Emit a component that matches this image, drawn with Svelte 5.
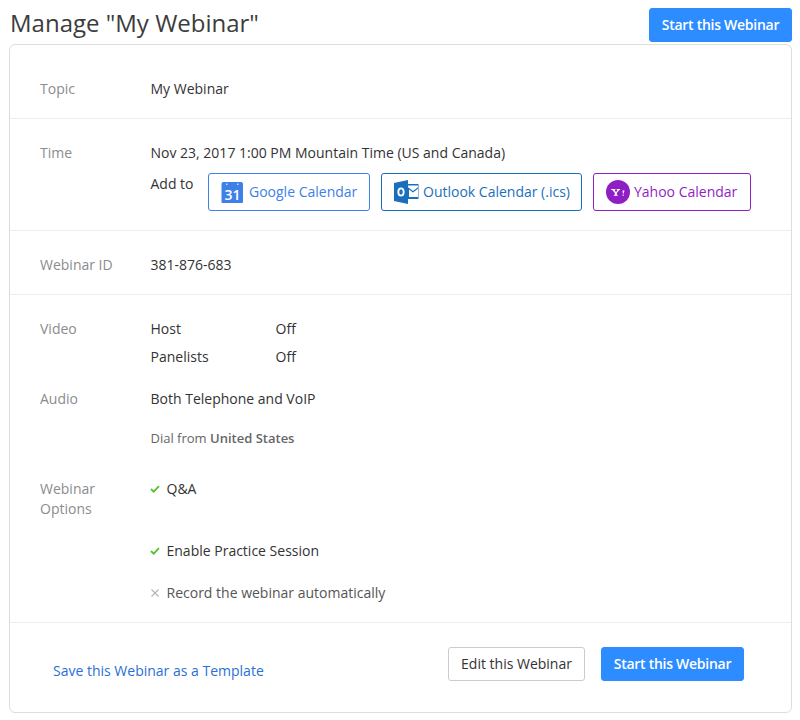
<script>
  const title = 'Manage "My Webinar"';
</script>

<div class="page">
  <header class="top">
    <h1>{title}</h1>
    <button class="btn primary small">Start this Webinar</button>
  </header>

  <section class="card">
    <div class="row topic">
      <div class="label">Topic</div>
      <div class="value">My Webinar</div>
    </div>

    <div class="row time">
      <div class="label">Time</div>
      <div class="value">
        <div>Nov 23, 2017 1:00 PM Mountain Time (US and Canada)</div>
        <div class="addto">
          <span class="addlabel">Add to</span>
          <a class="cal google" href="#g">
            <svg width="24" height="24" viewBox="0 0 24 24">
              <path d="M2 2h18a2 2 0 0 1 2 2v18a1 1 0 0 1-1 1H1.500a1 1 0 0 1-1-1V4a2 2 0 0 1 1.500-2z" fill="#3d80e8"/>
              <rect x="5" y="3.500" width="1.500" height="1.500" fill="#cfe0fa"/>
              <rect x="16" y="3.500" width="1.500" height="1.500" fill="#cfe0fa"/>
              <text x="11.500" y="20" text-anchor="middle" class="cal31">31</text>
            </svg>
            Google Calendar
          </a>
          <a class="cal outlook" href="#o">
            <svg width="25" height="24" viewBox="0 0 25 24">
              <path d="M14 4h10.500v15H14z" fill="#1a6fbd"/>
              <path d="M14 5.500h10v1.800L19 11l-5-3.700z" fill="#fff"/>
              <path d="M15 9.500l4 2.900 5-3.700V17H15z" fill="#fff"/>
              <path d="M0 3L14 0v24L0 21z" fill="#1a6fbd"/>
              <ellipse cx="7" cy="12" rx="2.700" ry="3.600" fill="none" stroke="#fff" stroke-width="1.800"/>
            </svg>
            Outlook Calendar (.ics)
          </a>
          <a class="cal yahoo" href="#y">
            <svg width="24" height="24" viewBox="0 0 24 24">
              <circle cx="12" cy="12" r="12" fill="#8f1fc4"/>
              <path d="M5 9h4.500v.8l-1 .2 1.500 2.200 1.600-2.200-1-.2V9h3.600v.8l-.9.2-2.500 3v1.800l1 .2v.8H7.800V15l1-.2V13L6.300 10l-1.300-.2z" fill="#fff"/>
              <path d="M16.500 10.500h2l-.8 3h-.8zM16.600 14.500h1.200v1.200h-1.200z" fill="#fff"/>
            </svg>
            Yahoo Calendar
          </a>
        </div>
      </div>
    </div>

    <div class="row idrow">
      <div class="label">Webinar ID</div>
      <div class="value">381-876-683</div>
    </div>

    <div class="row details">
      <div class="block video">
        <div class="label">Video</div>
        <div class="value">
          <div class="pair"><span class="who">Host</span><span>Off</span></div>
          <div class="pair second"><span class="who">Panelists</span><span>Off</span></div>
        </div>
      </div>

      <div class="block audio">
        <div class="label">Audio</div>
        <div class="value">
          <div>Both Telephone and VoIP</div>
          <div class="dial">Dial from <strong>United States</strong></div>
        </div>
      </div>

      <div class="block options">
        <div class="label">Webinar<br />Options</div>
        <div class="value">
          <div class="opt qa">
            <svg class="mark" width="10" height="8" viewBox="0 0 10 8"><path d="M1 4l2.700 2.700L9 1.200" fill="none" stroke="#55c22c" stroke-width="1.800"/></svg>
            Q&amp;A
          </div>
          <div class="opt practice">
            <svg class="mark" width="10" height="8" viewBox="0 0 10 8"><path d="M1 4l2.700 2.700L9 1.200" fill="none" stroke="#55c22c" stroke-width="1.800"/></svg>
            Enable Practice Session
          </div>
          <div class="opt record">
            <svg class="mark" width="10" height="10" viewBox="0 0 10 10"><path d="M1.500 1.500l7 7M8.500 1.500l-7 7" fill="none" stroke="#b5b5b5" stroke-width="1.200"/></svg>
            Record the webinar automatically
          </div>
        </div>
      </div>
    </div>

    <footer class="foot">
      <a class="template" href="#t">Save this Webinar as a Template</a>
      <div class="actions">
        <button class="btn ghost">Edit this Webinar</button>
        <button class="btn primary">Start this Webinar</button>
      </div>
    </footer>
  </section>
</div>

<style>
  :global(body) {
    margin: 0;
    background: #fff;
  }

  .page {
    width: 800px;
    height: 720px;
    box-sizing: border-box;
    padding: 8px 8px 0 9px;
    font-family: "Open Sans", "Liberation Sans", sans-serif;
    font-size: 14px;
    line-height: 20px;
    color: #333;
    overflow: hidden;
  }

  .top {
    display: flex;
    justify-content: space-between;
    align-items: flex-start;
    height: 36px;
  }

  h1 {
    margin: 0 0 0 1px;
    font-size: 24px;
    line-height: 30px;
    font-weight: 400;
    color: #3c3c3c;
  }

  .btn {
    box-sizing: border-box;
    height: 34px;
    border-radius: 3px;
    font-family: inherit;
    font-size: 14px;
    font-weight: 600;
    letter-spacing: -0.28px;
    line-height: 20px;
    padding: 0;
    cursor: pointer;
  }

  .primary {
    width: 143px;
    background: #2d8cff;
    color: #fff;
    border: 1px solid #2d8cff;
  }

  .ghost {
    width: 137px;
    background: #fff;
    color: #333;
    border: 1px solid #ccc;
    font-weight: 400;
    letter-spacing: 0;
  }

  .card {
    box-sizing: border-box;
    width: 783px;
    height: 669px;
    border: 1px solid #ddd;
    border-radius: 6px;
  }

  .row {
    display: flex;
    box-sizing: border-box;
    padding-left: 30px;
    border-bottom: 1px solid #eee;
  }

  .label {
    width: 110.500px;
    flex: none;
    color: #8c8c8c;
  }

  .topic {
    height: 74px;
    padding-top: 34px;
  }

  .time {
    height: 112px;
    padding-top: 24px;
  }

  .addto {
    display: flex;
    align-items: flex-start;
    margin-top: 11px;
  }

  .addlabel {
    width: 57.500px;
    flex: none;
  }

  .cal {
    box-sizing: border-box;
    height: 38px;
    display: flex;
    align-items: center;
    gap: 4px;
    border: 1px solid;
    border-radius: 3px;
    text-decoration: none;
    padding-left: 12px;
    margin-top: -1px;
    margin-right: 11px;
  }

  .google {
    width: 162px;
    color: #3d80e8;
    border-color: #3d80e8;
  }

  .outlook {
    width: 201px;
    color: #1a6fbd;
    border-color: #1a6fbd;
  }

  .yahoo {
    width: 158px;
    color: #8f1fc4;
    border-color: #8f1fc4;
  }

  .cal31 {
    font-size: 14px;
    font-weight: 600;
    fill: #fff;
  }

  .idrow {
    height: 64px;
    padding-top: 24px;
  }

  .details {
    height: 328px;
    padding-top: 24px;
    flex-direction: column;
  }

  .block {
    display: flex;
  }

  .pair {
    display: flex;
  }

  .pair.second {
    margin-top: 8px;
  }

  .who {
    width: 125px;
  }

  .audio {
    margin-top: 22px;
  }

  .dial {
    margin-top: 19px;
    margin-bottom: 1px;
    font-size: 13px;
    color: #666;
  }

  .dial strong {
    font-weight: 600;
  }

  .options {
    margin-top: 30px;
  }

  .opt {
    display: flex;
    align-items: center;
  }

  .mark {
    width: 10px;
    flex: none;
    margin-left: -1px;
    margin-right: 7px;
  }

  .practice {
    margin-top: 42px;
  }

  .record {
    margin-top: 22px;
    color: #555;
  }

  .foot {
    height: 89px;
    display: flex;
    box-sizing: border-box;
    justify-content: space-between;
    padding: 24px 47px 0 43px;
  }

  .template {
    color: #2a6fd6;
    text-decoration: none;
    margin-top: 14px;
  }

  .actions {
    display: flex;
    gap: 16px;
  }
</style>
